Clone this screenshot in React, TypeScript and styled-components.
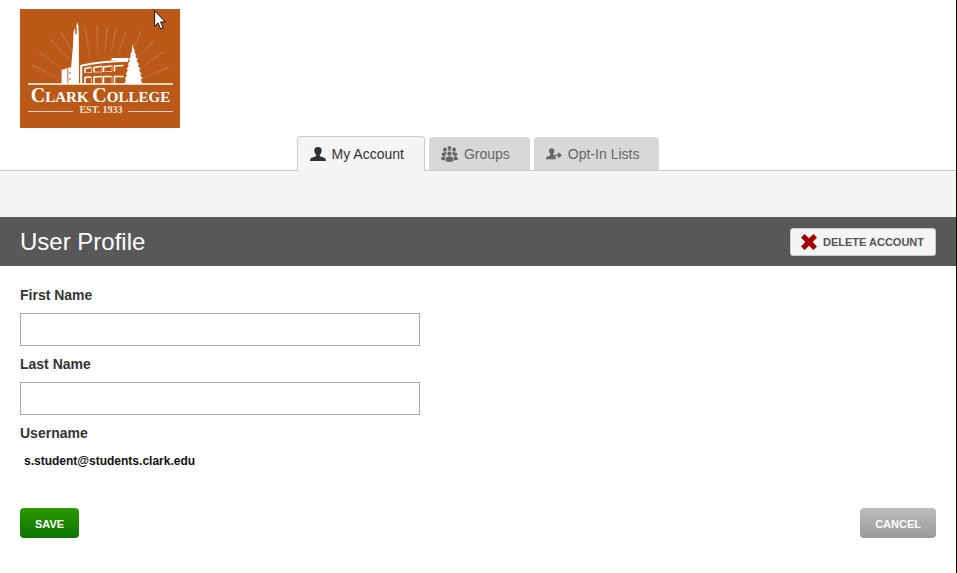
import React from "react";
import styled, { createGlobalStyle, css } from "styled-components";

const GlobalStyle = createGlobalStyle`
  * { box-sizing: border-box; }
  html, body, #root { min-height: 100vh; margin: 0; }
  body { background: #fff; font-family: "Liberation Sans", Arial, sans-serif; color: #333; }
  button, input { font-family: inherit; margin: 0; }
`;

const Page = styled.div`
  min-height: 100vh;
  border-right: 1px solid #000;
`;

const Masthead = styled.header`
  padding: 9px 20px 8px;
`;

const LogoLink = styled.a`
  display: block;
  width: 160px;
  height: 119px;
  position: relative;
`;

const Pointer = styled.svg`
  position: absolute;
  left: 134px;
  top: 1px;
`;

const TabBar = styled.nav`
  display: flex;
  justify-content: center;
  align-items: flex-end;
  gap: 4px;
  height: 35px;
  border-bottom: 1px solid #ccc;
`;

const Tab = styled.a<{ $active?: boolean }>`
  display: flex;
  align-items: center;
  gap: 6px;
  height: 33px;
  padding: 0 20px 0 12px;
  border-radius: 4px 4px 0 0;
  background: #d8d8d8;
  color: #666;
  font-size: 14px;
  line-height: 20px;
  text-decoration: none;
  ${(p) =>
    p.$active &&
    css`
      height: 35px;
      margin-bottom: -1px;
      border: 1px solid #ccc;
      border-bottom: 0;
      background: #f5f5f5;
      color: #333;
    `}
`;

const SubBar = styled.div`
  height: 46px;
  background: #f5f5f5;
`;

const TitleBar = styled.div`
  display: flex;
  align-items: center;
  justify-content: space-between;
  min-height: 49px;
  padding: 0 20px;
  background: #585858;
`;

const Title = styled.h1`
  margin: 0;
  color: #fff;
  font-size: 24px;
  line-height: 28px;
  font-weight: 400;
`;

const DeleteButton = styled.button`
  display: flex;
  align-items: center;
  gap: 6px;
  height: 28px;
  padding: 0 11px 0 10px;
  border: 1px solid #ccc;
  border-radius: 3px;
  background: #f5f5f5;
  color: #555;
  font-size: 11px;
  font-weight: 700;
  white-space: nowrap;
`;

const Form = styled.form`
  padding: 20px;
`;

const Field = styled.div`
  max-width: 400px;
  margin-bottom: 9px;
`;

const Label = styled.label`
  display: block;
  font-size: 14px;
  font-weight: 700;
  line-height: 18px;
`;

const TextInput = styled.input`
  display: block;
  width: 100%;
  height: 33px;
  margin-top: 9px;
  padding: 0 8px;
  border: 1px solid #aaa;
  background: #fff;
  font-size: 14px;
`;

const Username = styled.output`
  display: block;
  padding: 11px 4px 0;
  color: #111;
  font-size: 12px;
  font-weight: 700;
  line-height: 16px;
`;

const Actions = styled.div`
  display: flex;
  justify-content: space-between;
  margin-top: 39px;
`;

const ActionButton = styled.button<{ $primary?: boolean }>`
  height: 30px;
  padding: 2px 15px 0;
  border: 0;
  border-radius: 4px;
  color: #fff;
  background: ${(p) =>
    p.$primary ? "linear-gradient(#2c9a00, #0c7400)" : "linear-gradient(#bdbdbd, #999)"};
  font-size: 11px;
  font-weight: 700;
`;

const RAYS = [
  [12, 56, 42, 71], [19, 43, 43, 61], [30, 30, 50, 51], [41, 23, 52, 42],
  [65, 17, 70, 50], [77, 17, 78, 46], [87, 18, 85, 44], [96, 19, 91, 44],
  [106, 23, 98, 45], [121, 22, 114, 38], [134, 32, 117, 50],
  [143, 43, 119, 60], [149, 58, 121, 70],
];

function Logo() {
  return (
    <svg width="160" height="119" viewBox="0 0 160 119" role="img" aria-label="Clark College, Est. 1933">
      <rect width="160" height="119" fill="#b95817" />
      <g fill="#cb7c43" opacity=".65">
        {RAYS.map(([x, y, a, b]) => {
          const d = Math.hypot(a - x, b - y);
          const nx = (b - y) / d;
          const ny = (x - a) / d;
          return (
            <polygon
              key={`${x}-${y}`}
              points={`${x - nx},${y - ny} ${x + nx},${y + ny} ${a + nx * 0.4},${b + ny * 0.4} ${a - nx * 0.4},${b - ny * 0.4}`}
            />
          );
        })}
      </g>
      <g fill="#fff">
        <path d="M57.300 13l1.200 4.500.3 7.500L59 75h-6.500l-3-1 1.500-15 2-22 .5-14 1-3 1.500-1z" />
        <path d="M41.600 61l5.800-2v16h-5.800zM48.300 58.500h3v16.500h-3z" />
        <path d="M112.300 35l1.200 4 1.600 3-1 .5 2.400 4-1.400.3 2.800 4.200-1.600.2 3 4.600-1.700.2 3 4.500-1.800.2 3 4.500-1.900.2 2.800 4.500-2 .4 1.600 4.500h-18l2-4.200-1.800-.3 2.700-4.500-1.600-.3 2.400-4.700-1.600-.2 2.600-4.500-1.400-.3 2.400-4.600-1.200-.2 2.300-4.500-1-.3 1.700-4z" />
        <path d="M8 74.200h145v1.500H8z" />
      </g>
      <g fill="none" stroke="#fff">
        <path d="M61.200 75V56.800Q80 52.500 108 51.800" strokeWidth="2" />
        <path d="M91.500 50h17" strokeWidth="2" />
        <path d="M65 64v-4.500l6-1.300M74 63.500v-5l8-1.200M83.500 63v-5l8-.9M94.500 62.500v-5.500l9-.5M65 75v-6.500l6-.5M74 75v-7l8-.5M83.500 75v-7.500h8M94.500 75v-7.500h9" strokeWidth="1.500" />
        <path d="M71.500 58v5.500h-5M82 57v6h-7M92 56v6.500h-7M71.500 68v6M82 67.500v6.500M92 67.500v6.500" strokeWidth=".9" opacity=".65" />
      </g>
      <path d="M55.300 20.500v-2h1.500v6l-1.500 1zM49.500 63h1v2h-1zM49.500 69h1v2h-1z" fill="#b95817" />
      <path d="M8 102h45v1H8zM108 102h45v1h-45z" fill="#edcdb6" />
      <g fontFamily="'Liberation Serif', serif" fill="#fff" textAnchor="middle">
        <text x="80.500" y="93" fontSize="15" fontWeight="700">
          <tspan fontSize="20">C</tspan>LARK <tspan fontSize="20">C</tspan>OLLEGE
        </text>
        <text x="81" y="104" fontSize="10" fontWeight="700" fill="#f6e2d4">EST. 1933</text>
      </g>
    </svg>
  );
}

function PersonIcon() {
  return (
    <svg width="16" height="14" viewBox="0 0 16 14" fill="currentColor" aria-hidden="true">
      <path d="M8 0c2.600 0 3.800 1.400 3.700 3.600-.1 2-.9 3.400-1.900 4.300 0 1 .3 1.400 1.500 1.800l3 1c1.200.5 1.700 1.500 1.700 3.300H0c0-1.800.5-2.800 1.700-3.300l3-1c1.200-.4 1.500-.8 1.500-1.800-1-.9-1.800-2.300-1.900-4.300C4.200 1.400 5.400 0 8 0z" />
    </svg>
  );
}

function GroupIcon() {
  return (
    <svg width="17" height="16" viewBox="0 0 17 16" fill="currentColor" aria-hidden="true">
      <circle cx="8.500" cy="1.900" r="1.900" />
      <circle cx="3.900" cy="3.400" r="1.900" />
      <circle cx="13.100" cy="3.400" r="1.900" />
      <circle cx="8.500" cy="7.700" r="2.100" />
      <circle cx="2.700" cy="8.300" r="1.900" />
      <circle cx="14.300" cy="8.300" r="1.900" />
      <path d="M6.500 5.300c.3-.8 1-1.200 2-1.200s1.700.4 2 1.200c-1.300-.6-2.700-.6-4 0zM2.200 5.800c1.300-.6 2.700-.5 3.400.4v2l-.6 1.300c0-1.600-.9-2.900-2.800-3.700zM14.800 5.800c-1.300-.6-2.700-.5-3.400.4v2l.6 1.300c0-1.600.9-2.900 2.800-3.700zM4.700 15.200c-.2-3.300.9-5 3.800-5s4 1.700 3.800 5c-2 .9-5.600.9-7.600 0zM0 13.500c0-2 .8-3 2.600-3 1 0 1.800.3 2.100 1-.5.8-.7 1.700-.7 2.700-1.500.2-3 0-4-.7zM17 13.500c0-2-.8-3-2.600-3-1 0-1.800.3-2.100 1 .5.8.7 1.700.7 2.700 1.500.2 3 0 4-.7z" />
    </svg>
  );
}

function OptInIcon() {
  return (
    <svg width="16" height="12" viewBox="0 0 17 12" fill="currentColor" aria-hidden="true">
      <path d="M6 0c2 0 3 1.100 2.900 2.900-.1 1.500-.7 2.500-1.400 3.100v.8h2v2.700h1V11.500H0C0 9.700.5 9 1.600 8.600l2.200-.8c.8-.3 1-.8.8-2C3.800 5.200 3.200 4.200 3.100 2.900 3 1.100 4 0 6 0z" />
      <path d="M10 6.400h3V4l4 3.300-4 3.500V8.400h-3z" />
    </svg>
  );
}

function CrossIcon() {
  return (
    <svg width="16" height="16" viewBox="0 0 16 16" aria-hidden="true">
      <path d="M0 3.600L3.600 0 8 4.300 12.400 0 16 3.600 11.700 8l4.300 4.400-3.600 3.600L8 11.700 3.600 16 0 12.400 4.300 8z" fill="#a00000" />
    </svg>
  );
}

export default function App() {
  return (
    <>
      <GlobalStyle />
      <Page>
        <Masthead>
          <LogoLink href="#">
            <Logo />
            <Pointer width="13" height="20" viewBox="0 0 13 20" aria-hidden="true">
              <path d="M.6.8v15.500L4 13l2.600 5.800 2.500-1.200L6.600 12h4.800z" fill="#fff" stroke="#111" strokeWidth="1" />
            </Pointer>
          </LogoLink>
        </Masthead>
        <TabBar>
          <Tab href="#account" $active aria-current="page"><PersonIcon />My Account</Tab>
          <Tab href="#groups"><GroupIcon />Groups</Tab>
          <Tab href="#lists"><OptInIcon />Opt-In Lists</Tab>
        </TabBar>
        <SubBar />
        <main>
          <TitleBar>
            <Title>User Profile</Title>
            <DeleteButton type="button"><CrossIcon />DELETE ACCOUNT</DeleteButton>
          </TitleBar>
          <Form onSubmit={(e) => e.preventDefault()}>
            <Field>
              <Label htmlFor="first">First Name</Label>
              <TextInput id="first" type="text" />
            </Field>
            <Field>
              <Label htmlFor="last">Last Name</Label>
              <TextInput id="last" type="text" />
            </Field>
            <Label htmlFor="username">Username</Label>
            <Username id="username">s.student@students.clark.edu</Username>
            <Actions>
              <ActionButton type="submit" $primary>SAVE</ActionButton>
              <ActionButton type="button">CANCEL</ActionButton>
            </Actions>
          </Form>
        </main>
      </Page>
    </>
  );
}
